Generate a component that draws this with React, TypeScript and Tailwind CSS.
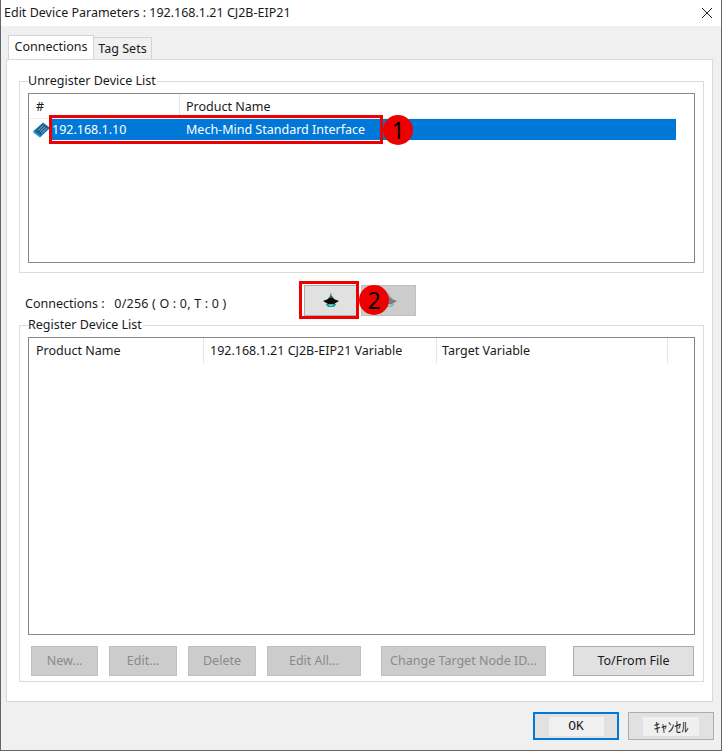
import React from "react";

function DisabledBtn({ label, w, ml }: { label: string; w: string; ml: string }) {
  return (
    <button className={`${w} ${ml} h-[30px] bg-[#cccccc] border border-[#bfbfbf] text-[#8a8a8a] text-[12.5px]`}>
      {label}
    </button>
  );
}

function DeviceIcon() {
  return (
    <svg width="17" height="16" viewBox="0 0 17 16" className="shrink-0">
      <path d="M0.5 9 L10 0.5 L16 5 L16 7 L7 15.5 L0.5 10.5 Z" fill="#1478b0" />
      <path d="M3 8.5 L10 2 L15 5.5 L7.5 12.5 Z" fill="#1d4f78" />
      <path d="M5 8.5 L10.5 3.3 M6.7 9.8 L12.2 4.6 M8.4 11 L13.8 5.9" stroke="#8fc4e0" strokeWidth="1" />
      <path d="M0.5 9 L7 14 L7 15.5 L0.5 10.5 Z" fill="#39a6d8" />
    </svg>
  );
}

function UpDownIcon({ dim }: { dim?: boolean }) {
  return (
    <svg width="16" height="16" viewBox="0 0 16 16" className={dim ? "opacity-40" : ""}>
      <path d="M8 0 L8.8 1.5 H7.2 Z" fill="#444444" />
      <path d="M8 1.5 L10.5 4.5 H5.5 Z" fill="#4fb3b3" />
      <path d="M7 2.5 h1 v1 h-1 Z M8 3.5 h1 v1 h-1 Z" fill="#111111" />
      <path d="M6 4.5 H10 L11 6 L16 8 L11 11 H5 L0 8 L5 6 Z" fill="#0a0a0a" />
      <path d="M2.5 11 H13.5 L11 14 H5 Z" fill="#1f9a96" />
      <path d="M5.5 11.5 H10.5 L9.5 13 H6.5 Z" fill="#7fd0cc" />
    </svg>
  );
}

function Group({ title, children, h, mt }: { title: string; children: React.ReactNode; h: string; mt: string }) {
  return (
    <fieldset className={`${h} ${mt} ml-[12px] mr-[8px] border border-[#dcdcdc] px-[8px] min-w-0`}>
      <legend className="text-[12.5px] text-[#1a1a1a] leading-[14px] pr-[1px]">{title}</legend>
      {children}
    </fieldset>
  );
}

export default function App() {
  return (
    <div
      className="relative w-[722px] h-[751px] overflow-hidden bg-[#f0f0f0] text-[#1a1a1a] text-[12.5px] border-x border-b border-[#666666]"
      style={{ fontFamily: '"Noto Sans", "Noto Sans CJK JP", sans-serif' }}
    >
      {/* title bar */}
      <div className="h-[26px] bg-white flex items-center justify-between pl-[3px] pr-[8px]">
        <span className="text-[12.5px]">Edit Device Parameters : 192.168.1.21 CJ2B-EIP21</span>
        <svg width="12" height="12" viewBox="0 0 12 12">
          <path d="M1 1 L11 11 M11 1 L1 11" stroke="#222222" strokeWidth="1" />
        </svg>
      </div>

      {/* tabs */}
      <div className="flex items-end h-[33px] pl-[7px]">
        <div className="h-[24px] w-[86px] bg-white border border-b-0 border-[#d4d4d4] flex items-center justify-center">
          Connections
        </div>
        <div className="h-[22px] w-[58px] bg-[#f0f0f0] border border-l-0 border-b-0 border-[#d4d4d4] flex items-center justify-center pt-[2px]">
          Tag Sets
        </div>
      </div>

      {/* tab panel */}
      <div className="ml-[5px] w-[707px] h-[643px] bg-white border border-[#d9d9d9] flex flex-col">
        <Group title="Unregister Device List" h="h-[199px]" mt="mt-[14px]">
          <div className="h-[170px] border border-[#888888] mt-[5px] bg-white">
            <div className="flex h-[25px] w-[647px] border-b border-[#ededed] items-center">
              <div className="w-[151px] pl-[7px] pt-[2px] border-r border-[#e5e5e5] h-full flex items-center">#</div>
              <div className="pl-[6px] pt-[2px]">Product Name</div>
              <div className="flex-1 h-full" />
            </div>
            <div className="flex w-[647px] h-[21px] items-center">
              <div className="w-[23px] h-full pl-[4px] flex items-center bg-white">
                <DeviceIcon />
              </div>
              <div className="flex-1 h-full flex items-center bg-[#0078d7] text-white pt-[1px]">
                <div className="w-[134px]">192.168.1.10</div>
                <div>Mech-Mind Standard Interface</div>
              </div>
            </div>
          </div>
        </Group>

        <div className="h-[52px] flex items-center pl-[18px] pt-[2px]">
          <span className="w-[279px] pt-[8px] whitespace-pre">
            Connections :   <span className="tracking-[0.2px]">0/256 ( O : 0, T : 0 )</span>
          </span>
          <button className="w-[53px] h-[31px] bg-[#e1e1e1] border border-[#adadad] flex items-center justify-center pt-[2px]">
            <UpDownIcon />
          </button>
          <button className="ml-[4px] w-[55px] h-[31px] bg-[#cccccc] border border-[#bfbfbf] flex items-center justify-center pt-[2px]">
            <UpDownIcon dim />
          </button>
        </div>

        <Group title="Register Device List" h="h-[364px]" mt="mt-[-7px]">
          <div className="h-[298px] border border-[#888888] mt-[5px] bg-white">
            <div className="flex h-[25px] items-center">
              <div className="w-[175px] pl-[7px] pt-[1px] h-full flex items-center border-r border-[#e5e5e5]">Product Name</div>
              <div className="w-[233px] pl-[6px] pt-[1px] h-full flex items-center border-r border-[#e5e5e5]">192.168.1.21 CJ2B-EIP21 Variable</div>
              <div className="w-[231px] pl-[5px] pt-[1px] h-full flex items-center border-r border-[#e5e5e5]">Target Variable</div>
            </div>
          </div>
          <div className="flex mt-[11px] pl-[3px]">
            <DisabledBtn label="New..." w="w-[67px]" ml="ml-0" />
            <DisabledBtn label="Edit..." w="w-[68px]" ml="ml-[11px]" />
            <DisabledBtn label="Delete" w="w-[68px]" ml="ml-[11px]" />
            <DisabledBtn label="Edit All..." w="w-[94px]" ml="ml-[11px]" />
            <DisabledBtn label="Change Target Node ID..." w="w-[165px]" ml="ml-[20px]" />
            <button className="ml-[27px] w-[121px] h-[30px] bg-[#e1e1e1] border border-[#adadad] text-[12.5px]">
              To/From File
            </button>
          </div>
        </Group>
      </div>

      {/* dialog buttons */}
      <div className="flex justify-end pr-[7px] mt-[10px]">
        <button className="w-[86px] h-[28px] bg-[#e1e1e1] border-2 border-[#0078d7] flex items-center justify-center">
          <span className="bg-[#f0f0f0] w-[55px] h-[19px] leading-[19px] text-[13px]" style={{ fontFamily: '"Liberation Mono", monospace' }}>OK</span>
        </button>
        <button className="ml-[9px] w-[86px] h-[28px] bg-[#e1e1e1] border border-[#adadad] flex items-center justify-center">
          <span className="bg-[#f0f0f0] w-[56px] h-[19px] leading-[19px] text-[14px]">ｷｬﾝｾﾙ</span>
        </button>
      </div>

      {/* annotations */}
      <div className="absolute left-[48px] top-[115px] w-[334px] h-[29px] border-[3px] border-[#ee0000]" />
      <div className="absolute left-[382px] top-[115px] w-[30px] h-[30px] rounded-full bg-[#ee0000] flex items-center justify-center text-[23px] text-black">1</div>
      <div className="absolute left-[298px] top-[281px] w-[60px] h-[38px] border-[3px] border-[#ee0000]" />
      <div className="absolute left-[358px] top-[285px] w-[30px] h-[30px] rounded-full bg-[#ee0000] flex items-center justify-center text-[23px] text-black">2</div>
    </div>
  );
}
